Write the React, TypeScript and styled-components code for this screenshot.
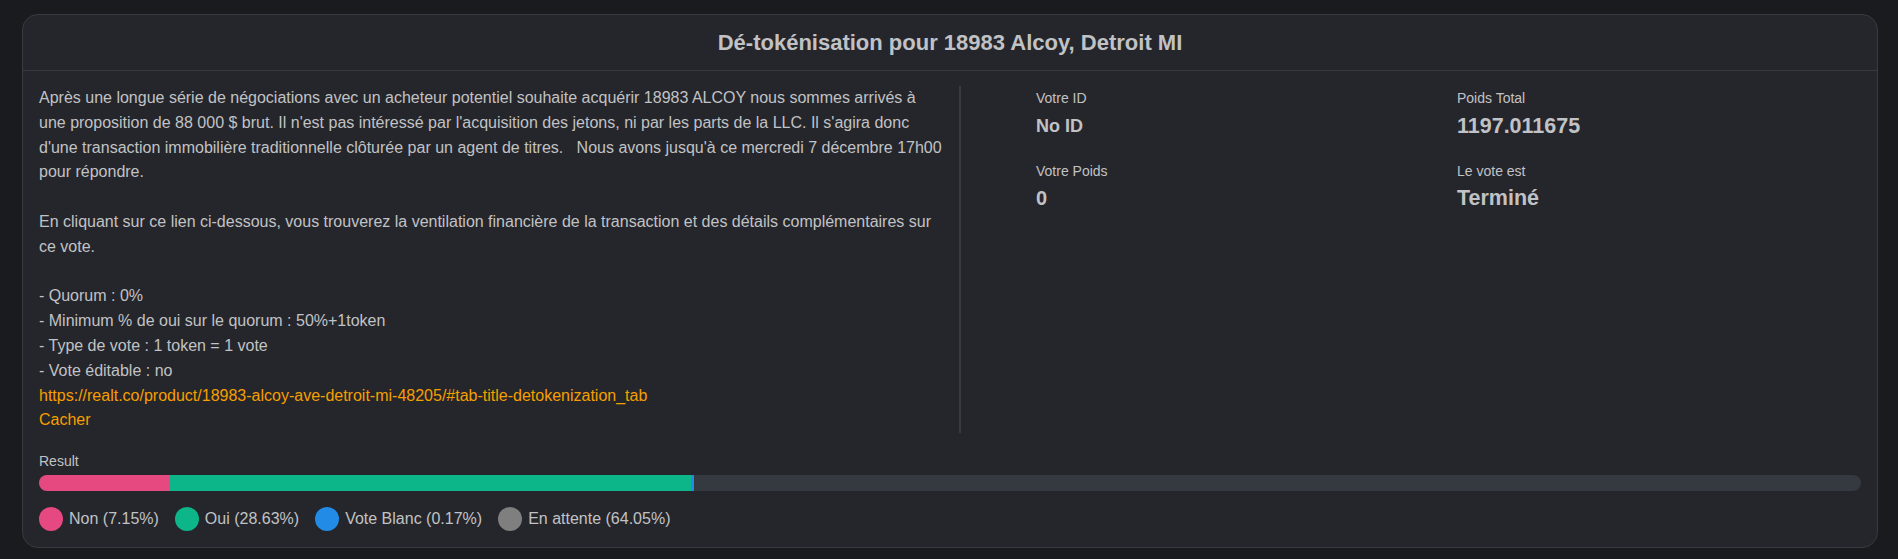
import styled, { createGlobalStyle } from "styled-components";

const GlobalStyle = createGlobalStyle`
  body {
    margin: 0;
    background-color: #1a1b1e;
    color: #c1c2c5;
    font-family: "Liberation Sans", Arial, sans-serif;
  }
`;

const Page = styled.div`
  padding: 14px 20px 11px 22px;
`;

const Card = styled.section`
  background-color: #25262b;
  border: 1px solid #373a40;
  border-radius: 16px;
`;

const Header = styled.header`
  height: 55px;
  display: flex;
  align-items: center;
  justify-content: center;
  border-bottom: 1px solid #373a40;
`;

const Title = styled.h2`
  margin: 0;
  font-size: 22px;
  font-weight: 700;
  line-height: 1.35;
  color: #c1c2c5;
`;

const Body = styled.div`
  padding: 15px 16px 16px 16px;
`;

const Top = styled.div`
  display: grid;
  grid-template-columns: 906px 1fr;
  column-gap: 14px;
`;

const Description = styled.div`
  font-size: 16px;
  line-height: 1.55;
  white-space: pre-wrap;
`;

const Link = styled.a`
  color: #f59f00;
  text-decoration: none;
`;

const HideButton = styled.div`
  color: #f59f00;
  font-size: 16px;
  line-height: 1.55;
  cursor: pointer;
`;

const Side = styled.div`
  border-left: 2px solid #373a40;
  padding: 2px 0 0 75px;
`;

const Stats = styled.div`
  display: grid;
  grid-template-columns: 421px 1fr;
  row-gap: 19px;
`;

const Stat = styled.div`
  display: flex;
  flex-direction: column;
`;

const Label = styled.span`
  font-size: 14px;
  line-height: 1.55;
  color: #c1c2c5;
`;

const Value = styled.span<{ size: number }>`
  font-size: ${(p) => p.size}px;
  font-weight: 700;
  line-height: 32px;
  color: #c1c2c5;
`;

const Result = styled.div`
  margin-top: 18px;
`;

const Bar = styled.div`
  margin-top: 2px;
  height: 16px;
  border-radius: 8px;
  overflow: hidden;
  display: flex;
  background-color: #343a40;
`;

const Segment = styled.div<{ color: string }>`
  height: 100%;
  background-color: ${(p) => p.color};
`;

const Legend = styled.div`
  margin-top: 16px;
  display: flex;
  gap: 16px;
`;

const LegendItem = styled.div`
  display: flex;
  align-items: center;
  gap: 6px;
  font-size: 16px;
  line-height: 24px;
`;

const Dot = styled.span<{ color: string }>`
  width: 24px;
  height: 24px;
  border-radius: 50%;
  background-color: ${(p) => p.color};
`;

const votes = [
  { label: "Non", value: 7.15, color: "#e64980" },
  { label: "Oui", value: 28.63, color: "#0cb688" },
  { label: "Vote Blanc", value: 0.17, color: "#228be6" },
  { label: "En attente", value: 64.05, color: "#7f7f7f" },
];

const text = `Après une longue série de négociations avec un acheteur potentiel souhaite acquérir 18983 ALCOY nous sommes arrivés à une proposition de 88 000 $ brut. Il n'est pas intéressé par l'acquisition des jetons, ni par les parts de la LLC. Il s'agira donc d'une transaction immobilière traditionnelle clôturée par un agent de titres.   Nous avons jusqu'à ce mercredi 7 décembre 17h00 pour répondre.

En cliquant sur ce lien ci-dessous, vous trouverez la ventilation financière de la transaction et des détails complémentaires sur ce vote.

- Quorum : 0%
- Minimum % de oui sur le quorum : 50%+1token
- Type de vote : 1 token = 1 vote
- Vote éditable : no
`;

const url = "https://realt.co/product/18983-alcoy-ave-detroit-mi-48205/#tab-title-detokenization_tab";

function App() {
  return (
    <Page>
      <GlobalStyle />
      <Card>
        <Header>
          <Title>Dé-tokénisation pour 18983 Alcoy, Detroit MI</Title>
        </Header>
        <Body>
          <Top>
            <div>
              <Description>
                {text}
                <Link href={url}>{url}</Link>
              </Description>
              <HideButton>Cacher</HideButton>
            </div>
            <Side>
              <Stats>
                <Stat>
                  <Label>Votre ID</Label>
                  <Value size={18}>No ID</Value>
                </Stat>
                <Stat>
                  <Label>Poids Total</Label>
                  <Value size={21.5}>1197.011675</Value>
                </Stat>
                <Stat>
                  <Label>Votre Poids</Label>
                  <Value size={20}>0</Value>
                </Stat>
                <Stat>
                  <Label>Le vote est</Label>
                  <Value size={21.5}>Terminé</Value>
                </Stat>
              </Stats>
            </Side>
          </Top>
          <Result>
            <Label>Result</Label>
            <Bar>
              {votes.slice(0, 3).map((v) => (
                <Segment key={v.label} color={v.color} style={{ width: `${v.value}%` }} />
              ))}
            </Bar>
          </Result>
          <Legend>
            {votes.map((v) => (
              <LegendItem key={v.label}>
                <Dot color={v.color} />
                {v.label} ({v.value.toFixed(2)}%)
              </LegendItem>
            ))}
          </Legend>
        </Body>
      </Card>
    </Page>
  );
}

export default App;
